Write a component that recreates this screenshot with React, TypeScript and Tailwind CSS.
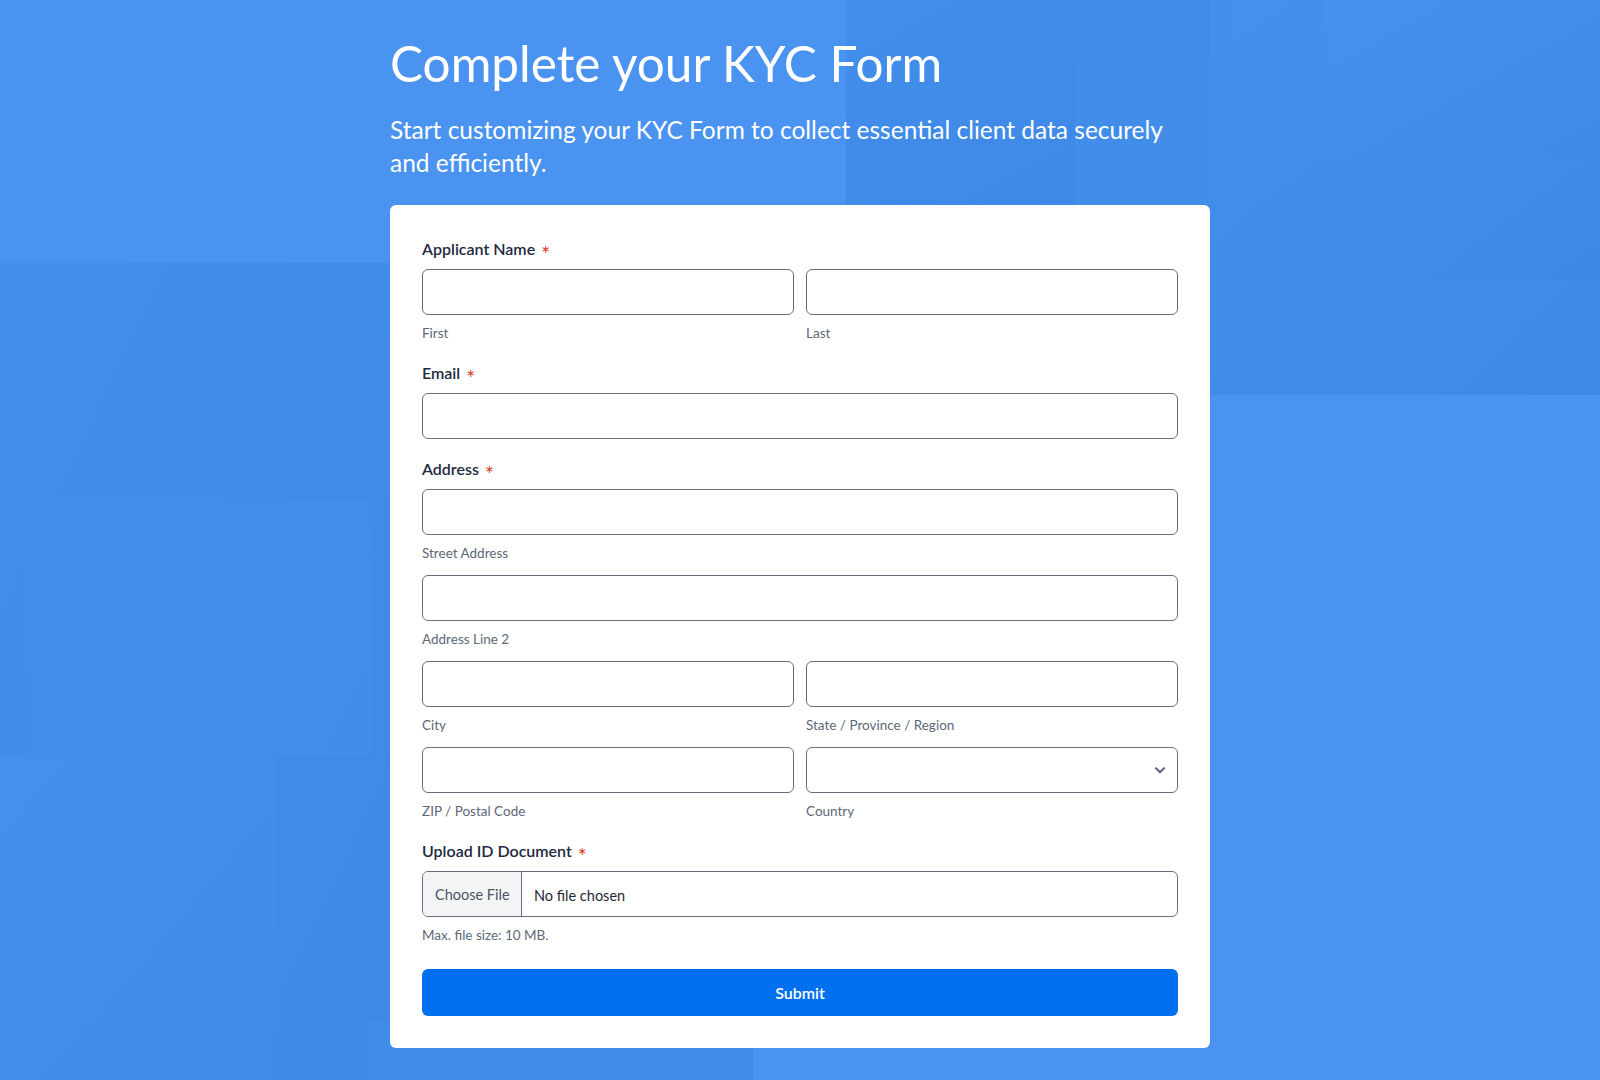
import { ReactNode } from "react";

function Label({ children }: { children: ReactNode }) {
  return (
    <div className="mb-2 flex items-center text-base leading-6 font-semibold text-[#1e2a3f]">
      {children}
      <span className="relative top-[4px] ml-[6px] text-[21px] leading-none font-normal text-[#dc3a26]">*</span>
    </div>
  );
}

function Sub({ children }: { children: ReactNode }) {
  return <div className="mt-2 text-[13.5px] leading-5 text-[#5d6878]">{children}</div>;
}

function Field({ sub, select }: { sub?: string; select?: boolean }) {
  return (
    <div className="flex-1">
      <div className="relative h-[46px] rounded-md border border-[#646e80] bg-white">
        {select && (
          <svg
            className="absolute right-[12px] top-[19px]"
            width="10"
            height="7"
            viewBox="0 0 10 7"
            fill="none"
          >
            <path d="M1 1.2l4 4 4-4" stroke="#5b6577" strokeWidth="2" strokeLinecap="round" strokeLinejoin="round" />
          </svg>
        )}
      </div>
      {sub && <Sub>{sub}</Sub>}
    </div>
  );
}

export default function App() {
  return (
    <div className="relative min-h-screen overflow-hidden bg-[#4a93f0] font-['Lato',sans-serif]">
      {/* background squares */}
      <div className="absolute left-0 top-[263px] h-[820px] w-[390px] bg-gradient-to-br from-[#438eeb] to-[#3f88e7]" />
      <div className="absolute left-[30px] top-[500px] h-[255px] w-[340px] bg-[#4590ec] opacity-60" />
      <div className="absolute left-0 top-[754px] h-[330px] w-[277px] bg-gradient-to-br from-[#4690ed] to-[#408ae8]" />
      <div className="absolute left-[846px] top-0 h-[205px] w-[386px] bg-gradient-to-br from-[#438eeb] to-[#3d88e6]" />
      <div className="absolute left-[1075px] top-[57px] h-[150px] w-[157px] bg-[#428dea]" />
      <div className="absolute left-[1210px] top-0 h-[395px] w-[390px] bg-gradient-to-br from-[#448fec] to-[#3e89e7]" />
      <div className="absolute left-[1231px] top-0 h-[280px] w-[369px] bg-gradient-to-br from-[#4690ed] to-[#3d88e6]" />
      <div className="absolute left-[1324px] top-0 h-[157px] w-[276px] bg-gradient-to-br from-[#4790ee] to-[#3e89e7]" />
      <div className="absolute left-[367px] top-[1020px] h-[60px] w-[386px] bg-[#418ce9]" />

      <div className="relative mx-auto w-[820px] pt-[34px] pb-[33px]">
        <h1 className="text-[49.5px] leading-[1.2] font-normal text-white">Complete your KYC Form</h1>
        <p className="mt-5 max-w-[800px] text-[24.5px] leading-[33px] text-white">
          Start customizing your KYC Form to collect essential client data securely and efficiently.
        </p>

        <div className="mt-[26px] rounded-md bg-white p-8">
          <div className="flex flex-col gap-[18px]">
            <div>
              <Label>Applicant Name</Label>
              <div className="flex gap-3">
                <Field sub="First" />
                <Field sub="Last" />
              </div>
            </div>

            <div>
              <Label>Email</Label>
              <Field />
            </div>

            <div>
              <Label>Address</Label>
              <div className="flex flex-col gap-3">
                <Field sub="Street Address" />
                <Field sub="Address Line 2" />
                <div className="flex gap-3">
                  <Field sub="City" />
                  <Field sub="State / Province / Region" />
                </div>
                <div className="flex gap-3">
                  <Field sub="ZIP / Postal Code" />
                  <Field sub="Country" select />
                </div>
              </div>
            </div>

            <div>
              <Label>Upload ID Document</Label>
              <div className="flex h-[46px] overflow-hidden rounded-md border border-[#646e80] bg-white">
                <div className="flex w-[99px] items-center border-r border-[#646e80] bg-[#f3f4f6] pl-[12px] text-[14.5px] text-[#4b5563]">
                  Choose File
                </div>
                <div className="flex items-center pl-3 pt-[2px] text-[14.5px] text-[#1f2733]">No file chosen</div>
              </div>
              <Sub>Max. file size: 10 MB.</Sub>
            </div>
          </div>

          <button className="mt-[24px] h-[47px] w-full rounded-md bg-[#006ff0] text-base font-semibold text-white">
            Submit
          </button>
        </div>
      </div>
    </div>
  );
}
